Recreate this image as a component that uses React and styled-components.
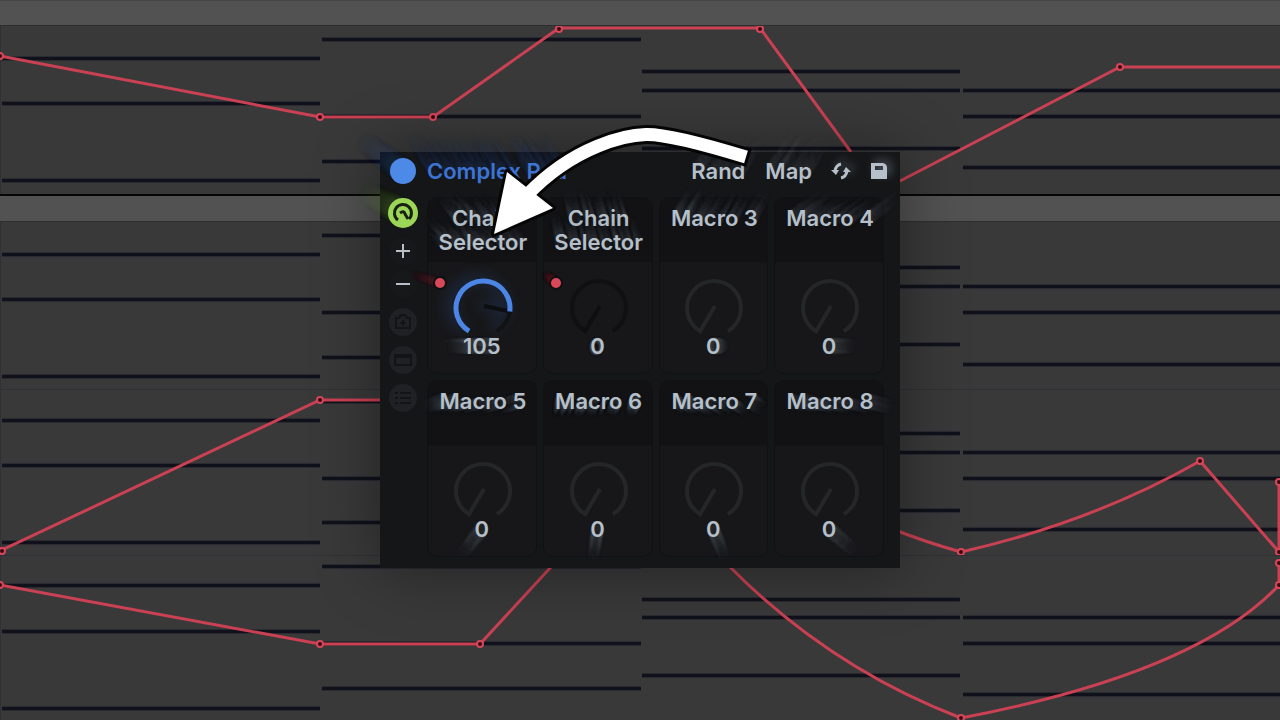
import React, { useState } from "react";
import styled, { createGlobalStyle } from "styled-components";

const GlobalStyle = createGlobalStyle`
  * {
    box-sizing: border-box;
  }
  body {
    margin: 0;
    background: #393939;
    font-family: Inter, "Liberation Sans", sans-serif;
  }
  button {
    font-family: inherit;
    border: 0;
    padding: 0;
    background: none;
    color: inherit;
    cursor: pointer;
  }
`;

// a trail of fading copies thrown in one direction
const trail = (dx, dy, rgb, strength = 0.1, steps = 18) =>
  Array.from({ length: steps }, (_, i) => {
    const t = (i + 1) / steps;
    const x = Math.round(dx * t);
    const y = Math.round(dy * t);
    return `${x}px ${y}px 3px rgba(${rgb}, ${(strength * (1 - t * 0.8)).toFixed(3)})`;
  }).join(", ");

const Stage = styled.main`
  display: grid;
  min-height: 100vh;
  overflow: hidden;
`;

const Arrangement = styled.div`
  grid-area: 1 / 1;
  display: grid;
  grid-template-rows: 26px 168fr 28px 167fr 166fr 165fr;
`;

const TrackHeader = styled.div`
  background: #525252;
  border-top: ${props => (props.$divided ? "2px solid #060606" : "1px solid #454545")};
  border-bottom: 1px solid #2e2e2e;
`;

const Lane = styled.section`
  contain: size;
  background: #393939;
  box-shadow: inset 1px ${props => (props.$ruled ? "1px" : "0")} 0 #303036;
`;

const LaneChart = styled.svg`
  display: block;
  width: 100%;
  height: 100%;
`;

const Panel = styled.section`
  grid-area: 1 / 1;
  place-self: center;
  position: relative;
  width: 520px;
  max-width: 100%;
  background: #151618;
  color: #b6c0ca;
  font-size: 22px;
  font-weight: 600;
  line-height: 24px;
  box-shadow: 0 0 60px rgba(0, 0, 0, 0.4);
`;

const TopBar = styled.header`
  display: flex;
  align-items: center;
  height: 38px;
  padding: 0 12px 0 10px;
`;

const PowerButton = styled.button`
  width: 26px;
  height: 26px;
  border-radius: 50%;
  background: #4d8ae8;
  box-shadow: ${trail(-34, -26, "60, 120, 200", 0.03)};
`;

const Title = styled.h1`
  flex: 1;
  margin: 0 0 0 11px;
  font-size: 22px;
  font-weight: 600;
  color: #3c74d4;
  text-shadow: ${trail(-20, -32, "60, 110, 200", 0.07)};
`;

const TopActions = styled.div`
  display: flex;
  align-items: center;
  gap: 20px;
`;

const TextButton = styled.button`
  font-size: 22px;
  font-weight: 600;
  line-height: 24px;
  text-shadow: ${trail(22, -34, "160, 175, 190", 0.05)};
`;

const IconButton = styled.button`
  display: flex;
  width: 18px;
  height: 24px;
  align-items: center;
  justify-content: center;

  svg {
    flex: none;
    filter: drop-shadow(4px -4px 4px rgba(170, 185, 200, 0.35));
  }
`;

const Body = styled.div`
  display: grid;
  grid-template-columns: 47px 1fr;
  padding: 7px 16px 11px 0;
`;

const Sidebar = styled.nav`
  display: flex;
  flex-direction: column;
  align-items: center;
  gap: 10px;
  padding: 2px 1px 0 0;
`;

const VariationButtons = styled.div`
  display: flex;
  flex-direction: column;
  gap: 5px;
`;

const RoundButton = styled.button`
  display: flex;
  align-items: center;
  justify-content: center;
  width: 28px;
  height: 28px;
  border-radius: 50%;
  background: ${props => (props.$lit ? "#9bd657" : props.$plain ? "#17181a" : "#202124")};
  color: ${props => (props.$plain ? "#b9bfc6" : props.$lit ? "#18200f" : "#131416")};
  box-shadow: ${props =>
    props.$lit
      ? `0 0 0 1px #9bd657, ${trail(-32, -18, "140, 200, 70", 0.03)}`
      : "none"};

  svg {
    flex: none;
  }
`;

const MacroGrid = styled.div`
  display: grid;
  grid-template-columns: repeat(4, 1fr);
  gap: 6px;
`;

const MacroCell = styled.article`
  position: relative;
  display: flex;
  flex-direction: column;
  align-items: center;
  height: 177px;
  border: 1px solid #101113;
  border-radius: 10px;
  background: linear-gradient(#121214 64px, #171719 65px);
`;

const MacroName = styled.label`
  width: 100%;
  height: 64px;
  padding: 8px 2px 0 4px;
  text-align: center;
  text-shadow: ${props => trail(props.$ray[0], props.$ray[1], "150, 165, 180", 0.06)};
`;

const MacroValue = styled.output`
  text-shadow: ${props => trail(props.$ray[0], props.$ray[1], "160, 175, 185", 0.07)};
`;

const Dial = styled.div`
  position: relative;
  width: 66px;
  height: 62px;
  margin: 12px 0 -2px 2px;

  input {
    position: absolute;
    inset: 0;
    width: 100%;
    height: 100%;
    margin: 0;
    opacity: 0;
  }
`;

const DialFace = styled.svg`
  overflow: visible;
  filter: ${props =>
    props.$glowing ? "drop-shadow(-6px -2px 7px rgba(50, 100, 190, 0.4))" : "none"};
`;

const MappedDot = styled.span`
  position: absolute;
  top: 80px;
  left: 7px;
  width: 10px;
  height: 10px;
  border-radius: 50%;
  background: #db4858;
  box-shadow: 0 0 0 2px #100f11, ${props => trail(props.$reach, -8, "210, 50, 70", 0.06)};
`;

const Pointer = styled.svg`
  position: absolute;
  top: 0;
  left: 0;
  width: 100%;
  height: 100%;
  overflow: visible;
  pointer-events: none;
`;

const columns = [
  [2, 320],
  [322, 641],
  [642, 960],
  [963, 1280]
];

const lanes = [
  {
    top: 26,
    height: 168,
    notes: [[58, 103, 180], [39, 116, 161], [71, 90, 148], [90, 116, 167]],
    curve: "M0 56L320 117H433L559 28H760L851 152M900 181L1120 67H1280",
    points: [[0, 56], [320, 117], [433, 117], [559, 29], [760, 29], [1120, 67]]
  },
  {
    top: 222,
    height: 167,
    notes: [[254, 299, 376], [235, 312, 357], [267, 286, 344], [286, 312, 364]],
    curve: "",
    points: []
  },
  {
    top: 389,
    height: 166,
    notes: [[420, 465, 542], [401, 478, 522], [433, 452, 510], [452, 478, 529]],
    curve: "M0 551L320 400H700M890 528Q925 542 961 552Q1093 522 1200 461L1279 552V482",
    points: [[2, 551], [320, 400], [961, 552], [1200, 461], [1279, 552], [1279, 482]]
  },
  {
    top: 555,
    height: 165,
    notes: [[585, 631, 708], [566, 643, 688], [599, 617, 675], [617, 643, 694]],
    curve: "M0 585L320 644H480L551 567M730 567Q830 668 961 718Q1197 673 1279 585V563",
    points: [[0, 585], [320, 644], [480, 644], [961, 718], [1279, 585], [1279, 563]]
  }
];

const initialMacros = [
  { name: "Chain Selector", value: 105, mapped: -26, arc: "#4b86e6", track: "#121214", hand: "#0d0e10", ray: [-16, -20], valueRay: [-24, 0] },
  { name: "Chain Selector", value: 0, mapped: -10, track: "#101012", hand: "#0f0f11", ray: [-7, -24], valueRay: [-3, 2] },
  { name: "Macro 3", value: 0, ray: [14, -24], valueRay: [10, 0] },
  { name: "Macro 4", value: 0, ray: [28, -20], valueRay: [24, 0] },
  { name: "Macro 5", value: 0, ray: [-20, 6], valueRay: [-20, 25] },
  { name: "Macro 6", value: 0, ray: [-4, 9], valueRay: [-4, 27] },
  { name: "Macro 7", value: 0, ray: [12, 8], valueRay: [11, 27] },
  { name: "Macro 8", value: 0, ray: [26, 6], valueRay: [26, 22] }
];

const START = 211;
const SWEEP = 298;

function polar(angle, radius) {
  const rad = (angle * Math.PI) / 180;
  return [33 + radius * Math.sin(rad), 34 - radius * Math.cos(rad)];
}

function arcPath(sweep) {
  const [x1, y1] = polar(START, 27);
  const [x2, y2] = polar(START + sweep, 27);
  return `M${x1} ${y1}A27 27 0 ${sweep > 180 ? 1 : 0} 1 ${x2} ${y2}`;
}

function Knob({ id, macro, onChange }) {
  const turned = (macro.value / 127) * SWEEP;
  const [hx, hy] = polar(START + turned, 29);
  return (
    <Dial>
      <DialFace $glowing={macro.arc} width="66" height="66" fill="none" strokeWidth="4" aria-hidden="true">
        <path d={arcPath(SWEEP)} stroke={macro.track || "#252628"} />
        <path d={`M34 32L${hx} ${hy}`} stroke={macro.hand || "#252628"} />
        {macro.arc && <path d={arcPath(turned)} stroke={macro.arc} strokeWidth="5" />}
      </DialFace>
      <input
        id={id}
        type="range"
        min="0"
        max="127"
        value={macro.value}
        onChange={event => onChange(Number(event.target.value))}
      />
    </Dial>
  );
}

function AutomationLane({ lane, ruled }) {
  return (
    <Lane $ruled={ruled}>
      <LaneChart viewBox={`0 ${lane.top} 1280 ${lane.height}`} preserveAspectRatio="none">
        {lane.notes.map((rows, i) =>
          rows.map(y => (
            <g key={`${i}-${y}`}>
              <rect x={columns[i][0]} y={y - 2} width={columns[i][1] - columns[i][0]} height="5" fill="#2a2b31" />
              <rect x={columns[i][0]} y={y - 1} width={columns[i][1] - columns[i][0]} height="3" fill="#10111a" />
            </g>
          ))
        )}
        <path d={lane.curve} fill="none" stroke="#c94153" strokeWidth="3" />
        {lane.points.map(([x, y]) => (
          <circle key={`${x}-${y}`} cx={x} cy={y} r="3" fill="#3a0a12" stroke="#d6475a" strokeWidth="2" />
        ))}
      </LaneChart>
    </Lane>
  );
}

function App() {
  const [macros, setMacros] = useState(initialMacros);

  const changeMacro = (index, value) => {
    setMacros(macros.map((macro, i) => (i === index ? { ...macro, value } : macro)));
  };

  return (
    <Stage>
      <GlobalStyle />
      <Arrangement>
        <TrackHeader />
        <AutomationLane lane={lanes[0]} />
        <TrackHeader $divided />
        <AutomationLane lane={lanes[1]} />
        <AutomationLane lane={lanes[2]} ruled />
        <AutomationLane lane={lanes[3]} ruled />
      </Arrangement>

      <Panel>
        <TopBar>
          <PowerButton aria-label="Device on" />
          <Title>Complex Pad</Title>
          <TopActions>
            <TextButton>Rand</TextButton>
            <TextButton>Map</TextButton>
            <IconButton aria-label="Swap">
              <svg width="22" height="20" viewBox="0 0 22 20" fill="none" stroke="currentColor" strokeWidth="3">
                <path d="M11 3Q6 4 5 10" />
                <path d="M1 9H9L6 14Z" fill="currentColor" stroke="none" />
                <path d="M11 17Q16 16 17 10" />
                <path d="M13 11H21L16 6Z" fill="currentColor" stroke="none" />
              </svg>
            </IconButton>
            <IconButton aria-label="Save">
              <svg width="18" height="18" viewBox="0 0 18 18" fill="currentColor">
                <path fillRule="evenodd" d="M1 1H13Q17 2 17 6V17H1ZM5 4V8H13V4Z" />
              </svg>
            </IconButton>
          </TopActions>
        </TopBar>

        <Body>
          <Sidebar>
            <RoundButton $lit aria-label="Macros">
              <svg width="24" height="24" viewBox="0 0 24 24" fill="none" stroke="currentColor" strokeWidth="3">
                <path d="M7 19A8.500 8.500 0 1 1 18 18" />
                <path d="M9 12Q13 9 14 13L17 18" />
              </svg>
            </RoundButton>
            <VariationButtons>
              <RoundButton $plain aria-label="Add macro">
                <svg width="16" height="16" stroke="currentColor" strokeWidth="2">
                  <path d="M8 1V15M1 8H15" />
                </svg>
              </RoundButton>
              <RoundButton $plain aria-label="Remove macro">
                <svg width="16" height="16" stroke="currentColor" strokeWidth="2">
                  <path d="M1 8H15" />
                </svg>
              </RoundButton>
            </VariationButtons>
            <RoundButton aria-label="Variations">
              <svg width="18" height="18" fill="none" stroke="currentColor" strokeWidth="2">
                <path d="M2 5H5L7 2H11L13 5H16V15H2ZM9 7V13M6 10H12" />
              </svg>
            </RoundButton>
            <RoundButton aria-label="Devices">
              <svg width="20" height="18" fill="none" stroke="currentColor" strokeWidth="2">
                <path d="M2 4H18V14H2ZM2 6H18" />
              </svg>
            </RoundButton>
            <RoundButton aria-label="Chains">
              <svg width="18" height="18" fill="none" stroke="currentColor" strokeWidth="2">
                <path d="M1 4H4M6 4H17M1 9H4M6 9H17M1 14H4M6 14H17" />
              </svg>
            </RoundButton>
          </Sidebar>

          <MacroGrid>
            {macros.map((macro, i) => (
              <MacroCell key={i}>
                <MacroName htmlFor={`macro-${i}`} $ray={macro.ray}>
                  {macro.name}
                </MacroName>
                {macro.mapped && <MappedDot $reach={macro.mapped} />}
                <Knob id={`macro-${i}`} macro={macro} onChange={value => changeMacro(i, value)} />
                <MacroValue htmlFor={`macro-${i}`} $ray={macro.valueRay}>
                  {macro.value}
                </MacroValue>
              </MacroCell>
            ))}
          </MacroGrid>
        </Body>

        <Pointer viewBox="380 152 520 416" aria-hidden="true">
          <g fill="none" stroke="#050505">
            <path d="M749 158C700 143 665 134 646 134.500S575 145 527 195" strokeWidth="19" />
            <path d="M494 234L507 172L553 208Z" fill="#050505" strokeWidth="6" strokeLinejoin="round" />
          </g>
          <path d="M746 157C700 143 665 134 646 134.500S575 145 527 195" fill="none" stroke="#fff" strokeWidth="13" />
          <path d="M494 234L507 172L553 208Z" fill="#fff" />
        </Pointer>
      </Panel>
    </Stage>
  );
}

export default App;
